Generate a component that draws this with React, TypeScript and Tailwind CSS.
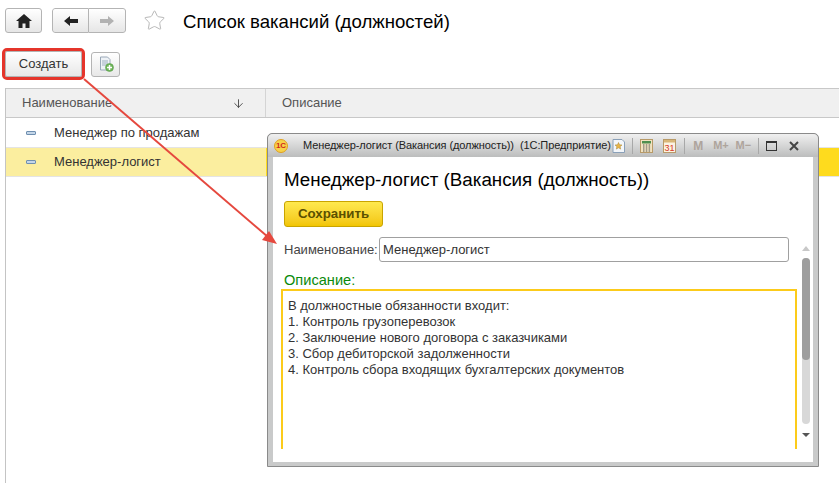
import React from 'react';
import { ArrowDown, Star } from 'lucide-react';

const navButton =
  'flex items-center justify-center h-[25px] border border-[#b4b4b4] bg-gradient-to-b from-white to-[#e6e6e6]';

function StandardRow({ label, active }: { label: string; active?: boolean }) {
  return (
    <div
      className={`flex items-center border-b border-[#e4e4e4] text-[13px] text-[#333] ${
        active ? 'h-[29px]' : 'h-[30px]'
      }`}
    >
      <div className={`flex items-center w-[260px] h-full ${active ? 'bg-[#fbee9f]' : 'bg-white'}`}>
        <span className="ml-[20px] w-[10px] h-[4px] rounded-[1px] border border-[#6f8fb0] bg-[#c4d6e8]" />
        <span className="ml-[18px]">{label}</span>
      </div>
      {active && <div className="flex-1 h-full bg-[#fedb1e]" />}
    </div>
  );
}

function TitleIcons() {
  return (
    <div className="flex items-center ml-auto h-full">
      <svg width="13" height="14" viewBox="0 0 13 14">
        <path d="M1 .5h9l2.500 2.500V13.500H1z" fill="#f3f6fa" stroke="#8aa0b8" />
        <path d="M6.500 3.500l1 2.300 2.500.2-1.900 1.600.6 2.500-2.200-1.300-2.200 1.300.6-2.500L3 6l2.500-.2z" fill="#e8b64a" stroke="#a8842e" strokeWidth=".5" />
      </svg>
      <span className="ml-[7px] w-px h-[16px] bg-[#a8a8a8]" />
      <svg width="13" height="14" viewBox="0 0 13 14" className="ml-[7px]">
        <rect x=".5" y=".5" width="12" height="13" fill="#f2e3c0" stroke="#b89a68" />
        <rect x="2" y="2" width="9" height="2.500" fill="#4f8f4f" />
        <path d="M3 6h1.500M5.800 6h1.500M8.600 6h1.500M3 8h1.500M5.800 8h1.500M8.600 8h1.500M3 10h1.500M5.800 10h1.500M8.600 10h1.500M3 12h1.500M5.800 12h1.500M8.600 12h1.500" stroke="#555" />
      </svg>
      <svg width="13" height="14" viewBox="0 0 13 14" className="ml-[10px]">
        <rect x=".5" y=".5" width="12" height="13" fill="#fbf3e2" stroke="#b89a68" />
        <rect x="1" y="1" width="11" height="2.500" fill="#d9b778" />
        <text x="6.500" y="12" textAnchor="middle" fontSize="9" fill="#d8391f" fontFamily="Liberation Sans">
          31
        </text>
      </svg>
      <span className="ml-[8px] w-px h-[16px] bg-[#a8a8a8]" />
      <span className="ml-[8px] text-[12px] font-bold text-[#aea49c]">M</span>
      <span className="ml-[10px] text-[11px] font-bold text-[#aea49c]">M+</span>
      <span className="ml-[7px] text-[11px] font-bold text-[#aea49c]">M−</span>
      <span className="ml-[7px] w-px h-[16px] bg-[#a8a8a8]" />
      <span className="ml-[7px] w-[11px] h-[10px] border border-[#333] border-t-2" />
      <svg width="10" height="10" viewBox="0 0 10 10" className="ml-[12px] mr-[13px]">
        <path d="M1 1l8 8M9 1l-8 8" stroke="#444" strokeWidth="2" />
      </svg>
    </div>
  );
}

function VacancyWindow() {
  return (
    <div className="absolute left-[267px] top-[133px] w-[552px] h-[334px] flex flex-col border border-[#8a8a8a] rounded-t-[5px] bg-[#c9caca] pb-[4px] px-[5px]">
      <div className="flex items-center h-[23px] shrink-0 -mx-[5px] px-[6px] rounded-t-[5px] bg-gradient-to-b from-[#f0f0f0] to-[#bcbdbd] text-[11px] tracking-[-0.08px] text-[#222]">
        <span className="flex items-center justify-center w-[14px] h-[14px] rounded-full bg-[#f7d24a] border border-[#e0a020] text-[8px] leading-none font-bold text-[#d0281c]">
          1С
        </span>
        <span className="ml-[15px] whitespace-nowrap">Менеджер-логист (Вакансия (должность))&nbsp; (1С:Предприятие)</span>
        <TitleIcons />
      </div>

      <div className="flex-1 flex flex-col bg-white pl-[11px] min-h-0">
        <h1 className="mt-[12px] text-[18.8px] leading-[21px] text-black whitespace-nowrap">
          Менеджер-логист (Вакансия (должность))
        </h1>

        <button
          type="button"
          className="mt-[11px] w-[99px] h-[26px] rounded-[3px] border border-[#c9a400] bg-gradient-to-b from-[#ffe94d] to-[#f2c500] text-[13.3px] font-bold text-[#5b5000]"
        >
          Сохранить
        </button>

        <div className="flex items-center mt-[10px] text-[13px] text-[#444]">
          <span className="w-[95px] whitespace-nowrap">Наименование:</span>
          <div className="flex items-center w-[410px] h-[25px] border border-[#a0a0a0] rounded-[3px] pl-[3px] text-[#333]">
            Менеджер-логист
          </div>
        </div>

        <div className="flex flex-1 min-h-0">
          <div className="flex-1 flex flex-col min-w-0">
            <div className="mt-[9px] text-[14.6px] leading-[18px] text-[#0a8a0a]">Описание:</div>
            <div className="-ml-[3px] w-[516px] h-[160px] border-t-2 border-x-2 border-[#fccb1a] pl-[5px] pt-[7px] text-[13px] leading-[16px] text-[#333]">
              <p>В должностные обязанности входит:</p>
              <p>1. Контроль грузоперевозок</p>
              <p>2. Заключение нового договора с заказчиками</p>
              <p>3. Сбор дебиторской задолженности</p>
              <p>4. Контроль сбора входящих бухгалтерских документов</p>
            </div>
          </div>
          {/* scrollbar */}
          <div className="relative w-[8px] mr-[3px] -mt-[16px] h-[195px] shrink-0 flex flex-col items-center">
            <span className="w-0 h-0 border-x-[4px] border-x-transparent border-b-[5px] border-b-[#c8c8c8]" />
            <div className="mt-[7px] w-[8px] h-[166px] rounded-[4px] bg-[#d8d8d8]">
              <div className="w-[8px] h-[102px] rounded-[4px] bg-[#9e9e9e]" />
            </div>
            <span className="mt-[9px] w-0 h-0 border-x-[4px] border-x-transparent border-t-[4px] border-t-[#555]" />
          </div>
        </div>
      </div>
    </div>
  );
}

export default function App() {
  return (
    <div className="relative w-[839px] h-[483px] overflow-hidden bg-white font-['Liberation_Sans',Arial,sans-serif]">
      <div className="flex items-center h-[33px] pt-[8px] pl-[5px]">
        <button type="button" className={`${navButton} w-[37px] rounded-[3px]`}>
          <svg width="16" height="14" viewBox="0 0 16 14">
            <path d="M8 0L0 7h2.500v7h4V9.500h3V14h4V7H16z" fill="#222" />
          </svg>
        </button>
        <div className="flex ml-[10px] w-[74px] rounded-[3px] overflow-hidden">
          <button type="button" className={`${navButton} w-[37px] rounded-l-[3px]`}>
            <svg width="16" height="12" viewBox="0 0 16 12">
              <path d="M1 6l6-5v3h8v4H7v3z" fill="#222" />
            </svg>
          </button>
          <button type="button" className={`${navButton} w-[37px] border-l-0 rounded-r-[3px]`}>
            <svg width="16" height="12" viewBox="0 0 16 12">
              <path d="M15 6L9 1v3H1v4h8v3z" fill="#b2b2b2" />
            </svg>
          </button>
        </div>
        <Star size={23} strokeWidth={1} className="ml-[17px] text-[#b4b4b4]" />
        <h1 className="ml-[17px] pt-[2px] text-[18.6px] text-black whitespace-nowrap">Список вакансий (должностей)</h1>
      </div>

      <div className="flex items-center mt-[18px] h-[26px] pl-[5px]">
        <button
          type="button"
          className="w-[77px] h-[26px] rounded-[2px] border border-[#b4b4b4] bg-gradient-to-b from-white to-[#e8e8e8] text-[13px] text-[#333] outline-[3px] outline-[#e5352b] outline-offset-[0px]"
        >
          Создать
        </button>
        <button
          type="button"
          className="flex items-center justify-center ml-[9px] w-[29px] h-[25px] rounded-[3px] border border-[#b4b4b4] bg-gradient-to-b from-white to-[#e8e8e8]"
        >
          <svg width="16" height="16" viewBox="0 0 16 16">
            <path d="M2.500 1h7l2.500 2.500V14h-9.500z" fill="#eef2f6" stroke="#9aa8b8" />
            <path d="M4 5h6M4 7h6M4 9h4" stroke="#9fb0c2" />
            <circle cx="11.500" cy="11.500" r="4" fill="#6fb55a" stroke="#4f9440" strokeWidth=".5" />
            <path d="M11.500 9v5M9 11.500h5" stroke="#fff" strokeWidth="1.500" />
          </svg>
        </button>
      </div>

      {/* list */}
      <div className="ml-[5px] mt-[11px] h-[395px] border-l border-[#c4c4c4]">
        <div className="flex h-[30px] items-center border-y border-[#c8c8c8] bg-[#f0f0f0] text-[13px] text-[#555]">
          <div className="flex items-center w-[260px] h-full pl-[16px] pr-[20px] border-r border-[#d4d4d4]">
            <span>Наименование</span>
            <ArrowDown size={13} strokeWidth={1.5} className="ml-auto text-[#333]" />
          </div>
          <span className="ml-[16px]">Описание</span>
        </div>
        <StandardRow label="Менеджер по продажам" />
        <StandardRow label="Менеджер-логист" active />
      </div>

      <VacancyWindow />

      {/* red annotation arrow */}
      <svg width="839" height="483" viewBox="0 0 839 483" className="absolute left-0 top-0 pointer-events-none">
        <path d="M84 79L268 237" stroke="#e5483e" strokeWidth="2" />
        <path d="M277 244l-15-4 7-9z" fill="#e5483e" />
      </svg>
    </div>
  );
}
